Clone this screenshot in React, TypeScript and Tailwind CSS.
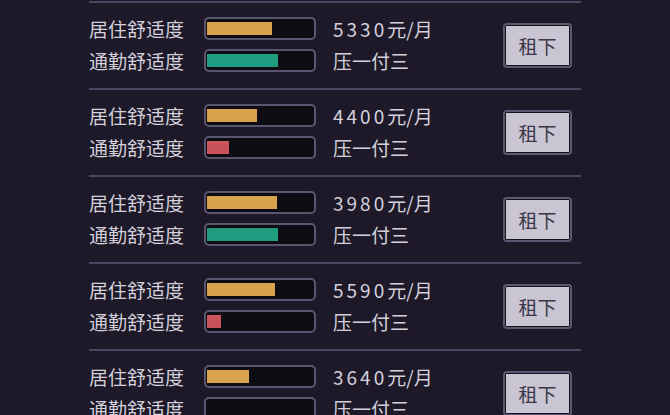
import React from 'react'

type Listing = {
  rent: string
  live: number
  commute: number
  commuteColor: 'teal' | 'red'
}

const listings: Listing[] = [
  { rent: '5330', live: 65, commute: 71, commuteColor: 'teal' },
  { rent: '4400', live: 50, commute: 22, commuteColor: 'red' },
  { rent: '3980', live: 70, commute: 71, commuteColor: 'teal' },
  { rent: '5590', live: 68, commute: 14, commuteColor: 'red' },
  { rent: '3640', live: 42, commute: 0, commuteColor: 'teal' },
]

const font = { fontFamily: '"Noto Sans CJK SC", "Noto Sans", sans-serif' }

function Bar({ value, color }: { value: number; color: 'orange' | 'teal' | 'red' }) {
  const fill =
    color === 'orange' ? 'bg-[#d9a24c]' : color === 'teal' ? 'bg-[#1f9b80]' : 'bg-[#c9525c]'
  return (
    <div className="flex h-[23px] w-[112px] items-center rounded-[5px] border-2 border-[#5b566f] bg-[#0e0c13] px-[1px]">
      {value > 0 && <div className={`h-[13px] ${fill}`} style={{ width: value }} />}
    </div>
  )
}

function Row({ item }: { item: Listing }) {
  return (
    <div>
      <div className="h-[2px] bg-[#4a4560]" />
      <div className="flex items-center pt-[9px] pb-[12px]">
        <div className="flex flex-col">
          <div className="flex h-[32px] items-center">
            <span className="w-[115px] text-[19px] leading-none">居住舒适度</span>
            <Bar value={item.live} color="orange" />
            <span className="ml-[17px] text-[19px] leading-none">
              <span className="tracking-[3px]">{item.rent}</span>元/月
            </span>
          </div>
          <div className="flex h-[32px] items-center">
            <span className="w-[115px] text-[19px] leading-none">通勤舒适度</span>
            <Bar value={item.commute} color={item.commuteColor} />
            <span className="ml-[17px] text-[19px] leading-none">压一付三</span>
          </div>
        </div>
        <div className="ml-auto mr-[9px] mt-[3px] rounded-[4px] border-2 border-[#5c5773] bg-[#141119] p-[1px]">
          <div className="flex h-[39px] w-[63px] items-center justify-center bg-[#c9c5d3] text-[19px] leading-none text-[#3a3646]">
            租下
          </div>
        </div>
      </div>
    </div>
  )
}

export default function App() {
  return (
    <div className="h-[415px] w-[670px] overflow-hidden bg-[#1d1928] text-[#d4d0dc]" style={font}>
      <div className="ml-[89px] w-[492px] pt-[1px]">
        {listings.map((l, i) => (
          <Row key={i} item={l} />
        ))}
      </div>
    </div>
  )
}
